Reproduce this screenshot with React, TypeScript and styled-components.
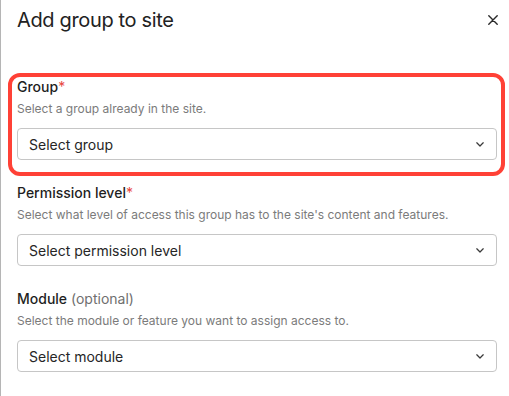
import React from "react";
import styled, { createGlobalStyle } from "styled-components";

const GlobalStyle = createGlobalStyle`
  html, body { margin: 0; padding: 0; background: #ffffff; }
  body { font-family: Inter, "Noto Sans", "Liberation Sans", sans-serif; color: #222222; }
  * { box-sizing: border-box; }
`;

const Panel = styled.div`
  width: 509px;
  height: 396px;
  border-left: 1px solid #b5b5b5;
  background: #ffffff;
  display: flex;
  flex-direction: column;
  overflow: hidden;
`;

const Header = styled.div`
  display: flex;
  align-items: center;
  justify-content: space-between;
  padding: 6px 11px 0 16px;
`;

const Title = styled.h2`
  margin: 0;
  font-size: 20px;
  line-height: 28px;
  font-weight: 400;
  color: #222222;
  letter-spacing: -0.35px;
`;

const CloseButton = styled.button`
  width: 10px;
  height: 10px;
  padding: 0;
  border: none;
  background: none;
  display: flex;
  align-items: center;
  justify-content: center;
  cursor: pointer;
  color: #2a2a2a;
`;

const Form = styled.div`
  display: flex;
  flex-direction: column;
  gap: 23px;
  padding: 43px 12px 0 16px;
`;

const Field = styled.div`
  position: relative;
  display: flex;
  flex-direction: column;
`;

const Highlight = styled.div`
  position: absolute;
  top: -4px;
  left: -9px;
  right: -8px;
  bottom: -16px;
  border: 4px solid #ff4136;
  border-radius: 12px;
  pointer-events: none;
`;

const Label = styled.div`
  font-size: 14px;
  line-height: 20px;
  font-weight: 500;
  color: #1f1f1f;
  margin-bottom: 4px;
`;

const Required = styled.span`
  color: #e8483f;
  font-weight: 400;
`;

const Optional = styled.span`
  color: #6f6f6f;
  font-weight: 400;
`;

const Description = styled.div`
  font-size: 12px;
  line-height: 16px;
  color: #7b7b7b;
  margin-bottom: 11px;
`;

const SelectBox = styled.div`
  height: 32px;
  border: 1px solid #c6c6c6;
  border-radius: 4px;
  display: flex;
  align-items: center;
  justify-content: space-between;
  padding: 0 12px 0 11px;
  font-size: 14px;
  color: #262626;
  background: #ffffff;
`;

const Chevron = () => (
  <svg width="8" height="5" viewBox="0 0 8 5" fill="none">
    <path d="M0.8 0.8 L4 4 L7.2 0.8" stroke="#3a3a3a" strokeWidth="1.25" strokeLinecap="round" strokeLinejoin="round" />
  </svg>
);

const CloseIcon = () => (
  <svg width="10" height="10" viewBox="0 0 10 10" fill="none">
    <path d="M0.8 0.8 L9.2 9.2 M9.2 0.8 L0.8 9.2" stroke="currentColor" strokeWidth="1.4" strokeLinecap="round" />
  </svg>
);

type FieldProps = {
  label: string;
  required?: boolean;
  optional?: boolean;
  description: string;
  placeholder: string;
  highlighted?: boolean;
};

const FormField = ({ label, required, optional, description, placeholder, highlighted }: FieldProps) => (
  <Field>
    <Label>
      {label}
      {required && <Required>*</Required>}
      {optional && <Optional> (optional)</Optional>}
    </Label>
    <Description>{description}</Description>
    <SelectBox>
      <span>{placeholder}</span>
      <Chevron />
    </SelectBox>
    {highlighted && <Highlight />}
  </Field>
);

export default function App() {
  return (
    <>
      <GlobalStyle />
      <Panel>
        <Header>
          <Title>Add group to site</Title>
          <CloseButton aria-label="Close">
            <CloseIcon />
          </CloseButton>
        </Header>
        <Form>
          <FormField
            label="Group"
            required
            description="Select a group already in the site."
            placeholder="Select group"
            highlighted
          />
          <FormField
            label="Permission level"
            required
            description="Select what level of access this group has to the site's content and features."
            placeholder="Select permission level"
          />
          <FormField
            label="Module"
            optional
            description="Select the module or feature you want to assign access to."
            placeholder="Select module"
          />
        </Form>
      </Panel>
    </>
  );
}
